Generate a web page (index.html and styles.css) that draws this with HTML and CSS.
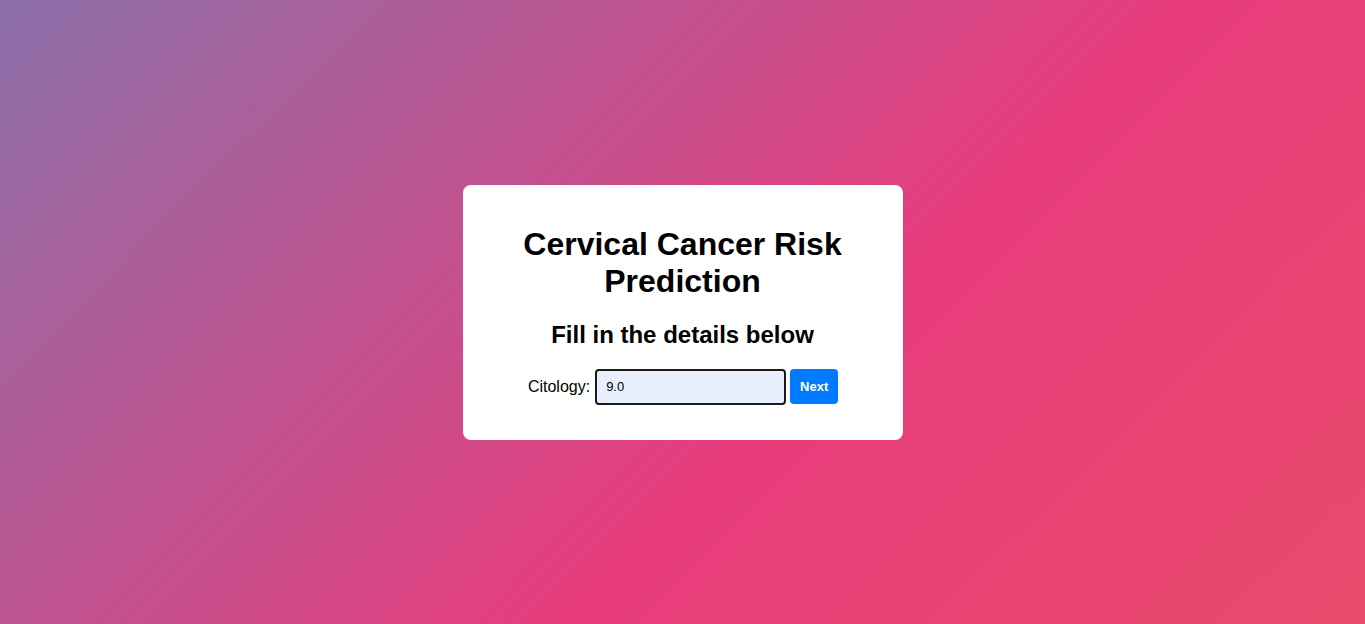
FILE: index.html
```html
<!DOCTYPE html>
<html>
<head>
<meta charset="utf-8">
<title>Cervical Cancer Risk Prediction</title>
<link rel="stylesheet" href="styles.css">
</head>
<body>
<main class="page">
  <section class="card">
    <h1 class="title">Cervical Cancer Risk Prediction</h1>
    <h2 class="subtitle">Fill in the details below</h2>
    <form class="row">
      <label class="label" for="citology">Citology:</label>
      <input class="field" id="citology" type="text" value="9.0">
      <button class="btn" type="button">Next</button>
    </form>
  </section>
</main>
</body>
</html>
```
FILE: styles.css
```css
html, body {
  margin: 0;
  height: 100%;
}
body {
  font-family: "Liberation Sans", Arial, sans-serif;
  background: linear-gradient(135deg, #8c70a9 0%, #e83c7c 60%, #e84b6b 100%);
}
.page {
  height: 100%;
  display: flex;
  align-items: center;
  justify-content: center;
}
.card {
  width: 400px;
  background: #fff;
  border-radius: 8px;
  padding: 20px;
  text-align: center;
}
.title {
  font-size: 32px;
  font-weight: bold;
  margin: 21px 0;
  line-height: 37px;
  color: #000;
}
.subtitle {
  font-size: 24px;
  font-weight: bold;
  margin: 20px 0;
  color: #000;
}
.row {
  display: flex;
  align-items: center;
  justify-content: center;
  gap: 4px;
  margin: 0 0 15px;
}
.label {
  font-size: 16px;
  color: #000;
  margin-left: 1px;
  margin-right: 1px;
}
.field {
  box-sizing: border-box;
  width: 191px;
  height: 36px;
  border: 2px solid #1a1a1a;
  border-radius: 4px;
  background: #e8f0fe;
  padding: 0 9px;
  font-family: "Liberation Sans", Arial, sans-serif;
  font-size: 13px;
  color: #000;
  outline: none;
}
.btn {
  box-sizing: border-box;
  height: 35px;
  width: 48px;
  border: none;
  border-radius: 4px;
  background: #007bff;
  color: #fff;
  font-family: "Liberation Sans", Arial, sans-serif;
  font-size: 13px;
  font-weight: bold;
  padding: 0;
}
```
